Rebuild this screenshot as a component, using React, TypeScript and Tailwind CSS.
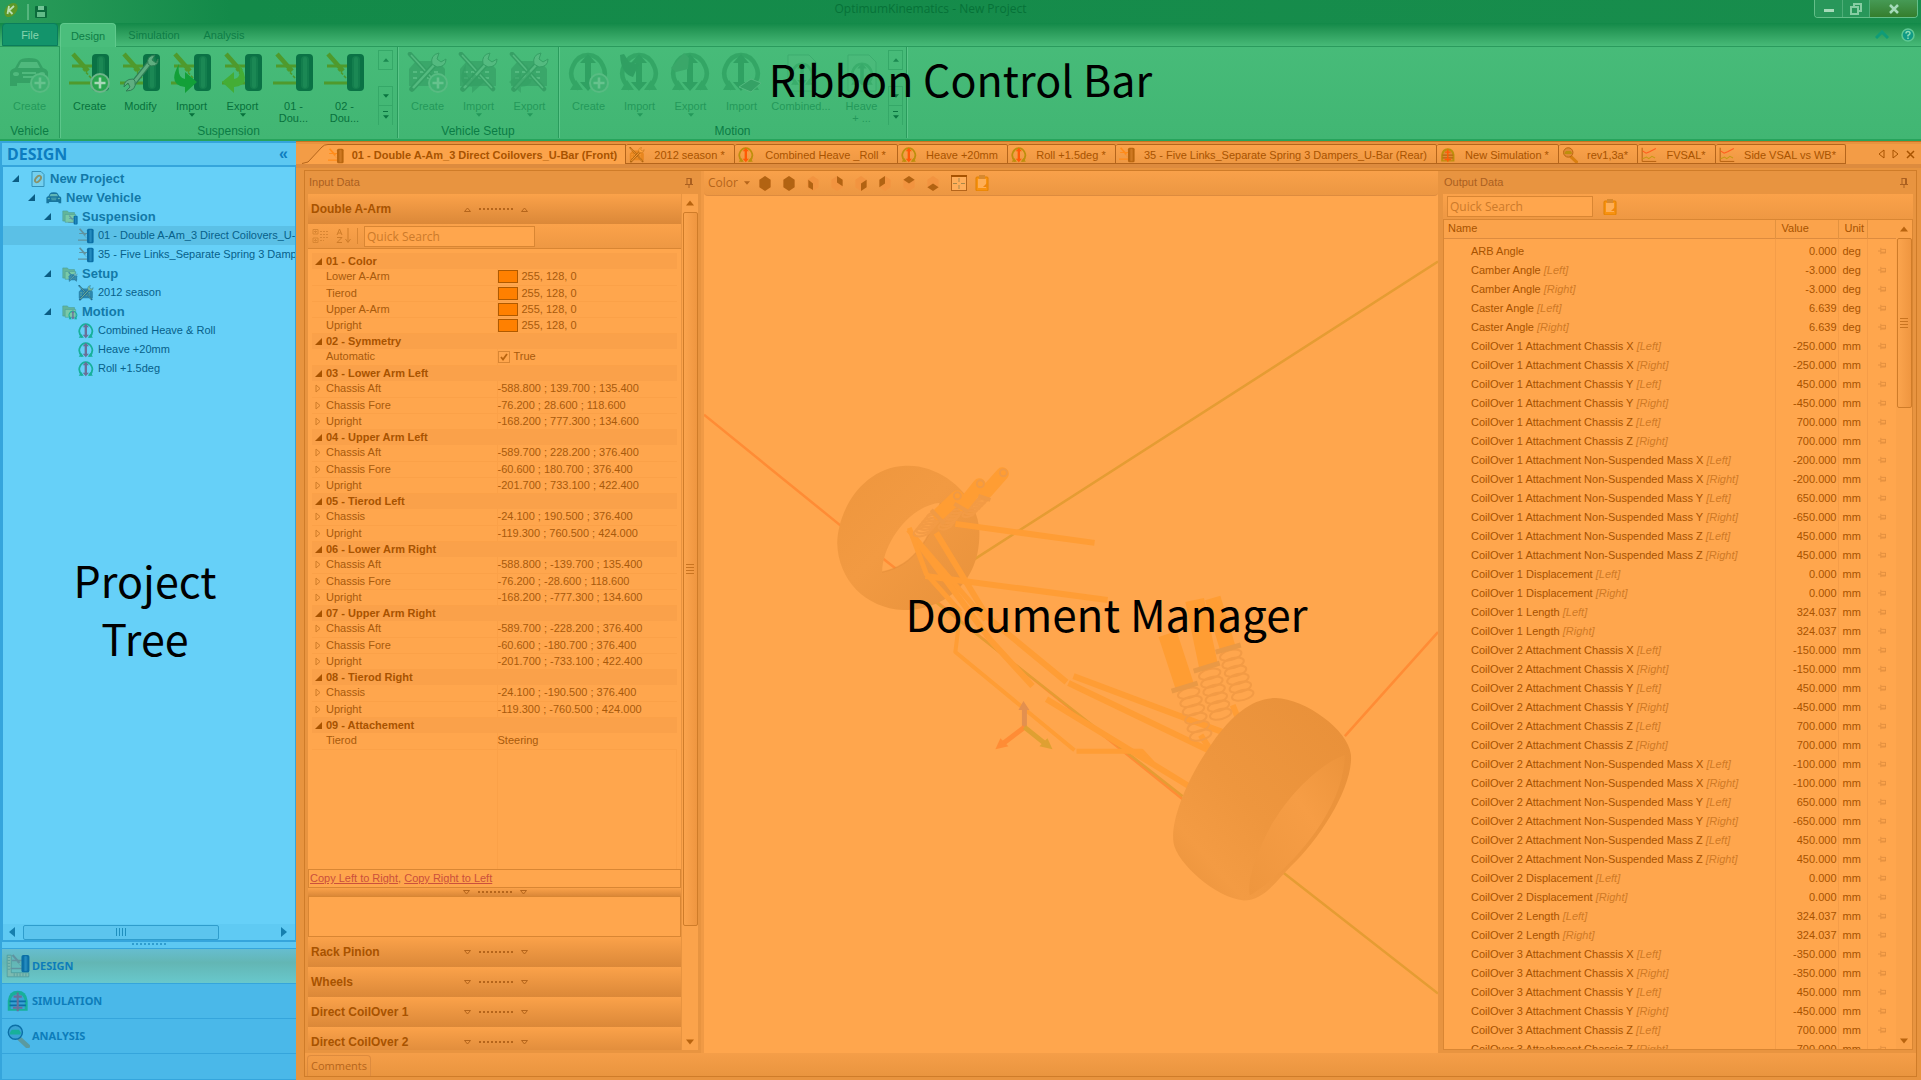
import React from "react";

/* ---------- icons ---------- */

type Tint = { arm: string; tire: string; tireLight: string; dark: string; ring: string; arrow: string };

const GREEN: Tint = { arm: "#4f9a2c", tire: "#0a7245", tireLight: "#2a9a60", dark: "#0f7b45", ring: "#2c9e5e", arrow: "#1f9453" };
const BLUE: Tint = { arm: "#5f93a0", tire: "#0b6fa6", tireLight: "#3aa3d4", dark: "#0b5d84", ring: "#17b09a", arrow: "#6a6f98" };
const ORANGE: Tint = { arm: "#ff8c1a", tire: "#b9660f", tireLight: "#e08a35", dark: "#b05a00", ring: "#bd8f0c", arrow: "#ff5a05" };

function SuspensionArt({ t }: { t: Tint }) {
  return (
    <g>
      <path d="M4 2 L19 19" stroke={t.arm} strokeWidth="4.5" />
      <path d="M3 14 L24 14 M0 31 L24 31" stroke={t.arm} strokeWidth="3" />
      <path d="M14 17 L23 27" stroke={t.arm} strokeWidth="1.6" strokeDasharray="3 1.5" />
      <rect x="23" y="2" width="17" height="37" rx="4" fill={t.tire} />
      <rect x="28" y="4" width="8" height="33" rx="4" fill={t.tireLight} opacity=".3" />
      <rect x="30" y="5" width="4" height="31" rx="2" fill={t.tireLight} opacity=".35" />
    </g>
  );
}

function MotionArt({ t, arrow = t.arrow }: { t: Tint; arrow?: string }) {
  return (
    <g fill="none">
      <path d="M11 37 C2 28 2 20 5 14 C9 5 15 3 20 3 C25 3 31 5 35 14 C38 20 38 28 29 37" stroke={t.ring} strokeWidth="4.5" />
      <path d="M2 38 L8 28 L15 38 Z M38 38 L32 28 L25 38 Z" fill={t.ring} />
      <path d="M20 9 V32" stroke={arrow} strokeWidth="6" />
      <path d="M20 2 L28 11 H12 Z M20 39 L12 30 H28 Z" fill={arrow} />
    </g>
  );
}

function CarArt({ c, l }: { c: string; l: string }) {
  return (
    <g>
      <path d="M1 20 Q2 17 6 16 L10 9 Q12 6 20 6 Q28 6 30 9 L34 16 Q38 17 39 20 V34 H32 V31 H8 V34 H1 Z" fill={c} />
      <path d="M9 16 L12 10 H28 L31 16 Z" fill={l} />
      <path d="M13 21 H27 M14 25 H26" stroke={l} strokeWidth="2" />
      <ellipse cx="7" cy="22" rx="3" ry="2" fill={l} />
      <ellipse cx="33" cy="22" rx="3" ry="2" fill={l} />
    </g>
  );
}

function SetupArt({ c, l, k }: { c: string; l: string; k: string }) {
  return (
    <g>
      <path d="M2 17 L9 9 H31 L38 17 V34 H2 Z" fill={c} />
      <path d="M6 20 H34 M6 26 H34" stroke={l} strokeWidth="2" strokeDasharray="4 3" />
      <path d="M3 2 L35 37" stroke={k} strokeWidth="4.5" strokeLinecap="round" />
      <path d="M4 3 L34 36" stroke={l} strokeWidth="1.6" />
      <path d="M5 37 L29 11" stroke={k} strokeWidth="5.5" strokeLinecap="round" />
      <path d="M6 36 L29 11" stroke={l} strokeWidth="2.4" />
      <path d="M25 12 Q23 3 32 1 L30 7 L34 10 L39 7 Q39 15 30 15 Z" fill={l} stroke={k} />
    </g>
  );
}

function Plus({ bright }: { bright?: boolean }) {
  return (
    <g>
      <circle cx="31" cy="31" r="9" fill={bright ? "#2aa64f" : "#3fae70"} stroke={bright ? "#6fb58b" : "#61bd88"} strokeWidth="2" />
      <path d="M31 25.5 V36.5 M25.5 31 H36.5" stroke={bright ? "#a9d8b8" : "#74c797"} strokeWidth="2.6" />
    </g>
  );
}

function Wrench() {
  return (
    <g>
      <path d="M12 33 L31 9" stroke="#2f7f55" strokeWidth="5.5" />
      <path d="M12 33 L31 9" stroke="#5fae80" strokeWidth="3" />
      <path d="M28 12 Q26 4 35 3 L32 8 L36 11 L38 7 Q39 14 31 14 Z M15 29 Q17 39 6 39 L10 35 L8 31 L4 35 Q4 27 13 27 Z" fill="#5fae80" stroke="#2f7f55" />
    </g>
  );
}

const ImportArrow = ({ c = "#12a038" }: { c?: string }) => (
  <path d="M8 12 Q-4 33 14 35 V41 L26 30 L14 20 V27 Q6 26 8 12 Z" fill={c} />
);
const ExportArrow = ({ c = "#44ad35" }: { c?: string }) => (
  <path d="M17 12 Q31 33 12 35 V41 L0 30 L12 20 V27 Q20 26 17 12 Z" fill={c} />
);

function Pic({ className, children }: { className: string; children: React.ReactNode }) {
  return (
    <svg viewBox="0 0 41 41" className={className} aria-hidden="true">
      {children}
    </svg>
  );
}

const Search = ({ t, handle }: { t: Tint; handle: string }) => (
  <g>
    <path d="M23 25 L37 38" stroke={handle} strokeWidth="8" strokeLinecap="round" />
    <circle cx="16" cy="14" r="12" fill={t.tireLight} stroke={t.tire} strokeWidth="2.5" />
    <path d="M7 14 L10 10 H22 L25 14 V18 H7 Z" fill={t.ring} />
  </g>
);

const Chart = () => (
  <g fill="none">
    <path d="M3 2 V37 H39" stroke="#b5620f" strokeWidth="2.5" />
    <path d="M4 10 L13 16 L22 12 L38 4" stroke="#ff5c1c" strokeWidth="2.6" />
    <path d="M4 30 L14 26 L20 30 L28 24 L36 28" stroke="#c79a14" strokeWidth="2.6" />
  </g>
);

const Simulation = ({ t }: { t: Tint }) => (
  <g>
    <path d="M3 37 V20 Q5 3 20 3 Q35 3 37 20 V37 Z" fill={t.ring} />
    <path d="M8 34 V20 Q10 9 20 9 Q30 9 32 20 V34 Z" fill={t.tireLight} />
    <path d="M6 21 H34 M6 28 H34" stroke={t.tire} strokeWidth="3" />
    <path d="M20 6 V38 M13 13 H27 M12 32 H28" stroke={t.arrow} strokeWidth="3.5" />
  </g>
);

const Folder = ({ children }: { children: React.ReactNode }) => (
  <svg viewBox="0 0 41 41" className="size-4 shrink-0" aria-hidden="true">
    <path d="M2 5 H14 L17 9 H32 V31 H2 Z" fill="#62b59b" stroke="#4b9f98" strokeWidth="1.5" />
    <path d="M8 14 H35 V34 H8 Z" fill="#79c9a8" stroke="#4b9f98" strokeWidth="1.5" />
    <g transform="translate(16 16) scale(.6)">{children}</g>
  </svg>
);

const PushPin = ({ className }: { className: string }) => (
  <svg viewBox="0 0 10 10" className={className} fill="none" stroke="currentColor" aria-hidden="true">
    <path d="M2.5 .5 H7.5 M3 .5 V6 M6.5 .5 V6 M7.5 .5 V6 M1 6.5 H9 M5 6.5 V10" />
  </svg>
);

const Clipboard = () => (
  <svg viewBox="0 0 14 16" className="h-4 w-[14px]" aria-hidden="true">
    <rect x="1" y="2" width="12" height="14" rx="1" fill="#f9920f" stroke="#e08000" />
    <rect x="3" y="4" width="8" height="9" fill="#ffae55" />
    <rect x="4" y="0" width="6" height="4" fill="#d8892f" />
    <path d="M8 12 H12 V8" fill="#f0860c" />
  </svg>
);

function Triangle({ dir, className }: { dir: "up" | "down" | "left" | "right"; className: string }) {
  const d = { up: "M0 8 L5 2 L10 8 Z", down: "M0 2 L5 8 L10 2 Z", left: "M8 0 L2 5 L8 10 Z", right: "M2 0 L8 5 L2 10 Z" }[dir];
  return (
    <svg viewBox="0 0 10 10" className={className} aria-hidden="true">
      <path d={d} fill="currentColor" />
    </svg>
  );
}

function Dots({ className }: { className: string }) {
  return (
    <span className="flex gap-[2px]" aria-hidden="true">
      {Array.from({ length: 9 }, (_, i) => (
        <span key={i} className={"size-[2px] " + className} />
      ))}
    </span>
  );
}

/* ---------- ribbon ---------- */

const dimSetup = <SetupArt c="#369f65" l="#5bbb84" k="#2f955d" />;
const dimMotion = <MotionArt t={GREEN} arrow="#27975a" />;

type Tool = { label: string; second?: string; menu?: boolean; dim?: boolean; width: string; art: React.ReactNode };

const W = "w-[51px]";
const suspensionTools: Tool[] = [
  { label: "Create", width: W, art: <><SuspensionArt t={GREEN} /><Plus bright /></> },
  { label: "Modify", width: W, art: <><SuspensionArt t={GREEN} /><Wrench /></> },
  { label: "Import", menu: true, width: W, art: <><SuspensionArt t={GREEN} /><ImportArrow /></> },
  { label: "Export", menu: true, width: W, art: <><SuspensionArt t={GREEN} /><ExportArrow /></> },
  { label: "01 -", second: "Dou...", width: W, art: <SuspensionArt t={GREEN} /> },
  { label: "02 -", second: "Dou...", width: W, art: <SuspensionArt t={GREEN} /> },
];
const setupTools: Tool[] = [
  { label: "Create", dim: true, width: W, art: <>{dimSetup}<Plus /></> },
  { label: "Import", dim: true, menu: true, width: W, art: <>{dimSetup}<g opacity=".6"><ImportArrow c="#2b935a" /></g></> },
  { label: "Export", dim: true, menu: true, width: W, art: <>{dimSetup}<g opacity=".6"><ExportArrow c="#2f985e" /></g></> },
];
const pageArt = (
  <g opacity=".6">
    <path d="M7 3 H28 L35 10 V39 H7 Z" fill="#52bd80" stroke="#319d62" />
    <g transform="translate(9 10) scale(.6)">{dimMotion}</g>
  </g>
);
const motionTools: Tool[] = [
  { label: "Create", dim: true, width: W, art: <>{dimMotion}<Plus /></> },
  { label: "Import", dim: true, menu: true, width: W, art: <>{dimMotion}<path d="M1 3 Q2 22 14 25 L20 12 L10 10 L5 2 Z" fill="#27955a" /></> },
  { label: "Export", dim: true, menu: true, width: W, art: <>{dimMotion}<path d="M1 16 L14 1 L19 6 L18 17 L6 20 Z" fill="#359f64" /></> },
  { label: "Import", dim: true, width: W, art: <>{dimMotion}<path d="M18 35 L30 27 L40 31 L30 40 Z" fill="#2f985e" stroke="#5bbb84" /></> },
  { label: "Combined...", dim: true, width: "w-[68px]", art: pageArt },
  { label: "Heave", second: "+ ...", dim: true, width: "w-[53px]", art: pageArt },
];

function ToolButton({ tool }: { tool: Tool }) {
  return (
    <button className={"flex flex-col items-center pt-[5px] text-[11px] leading-3 " + tool.width + (tool.dim ? " text-[#24985a]" : " text-[#07713c]")}>
      <svg viewBox="0 0 41 41" className={"mb-[7px] size-[41px] " + (tool.dim ? "opacity-70" : "")} aria-hidden="true">
        {tool.art}
      </svg>
      <span>{tool.label}</span>
      {tool.second && <span>{tool.second}</span>}
      {tool.menu && <Triangle dir="down" className="size-[6px]" />}
    </button>
  );
}

function Spinner() {
  return (
    <div className="mt-[3px] flex h-[75px] w-[15px] flex-col text-[#0a7541]">
      <button aria-label="Scroll up" className="flex h-5 items-center justify-center border border-[#35a868]">
        <Triangle dir="up" className="size-[6px] opacity-70" />
      </button>
      <button aria-label="Scroll down" className="mt-4 flex h-5 items-center justify-center border border-[#35a868]">
        <Triangle dir="down" className="size-[6px]" />
      </button>
      <button aria-label="More" className="flex h-[19px] flex-col items-center justify-center border-x border-[#35a868]">
        <span className="mb-[2px] h-px w-[5px] bg-current" />
        <Triangle dir="down" className="size-[6px]" />
      </button>
    </div>
  );
}

function Group({ name, children }: { name: string; children: React.ReactNode }) {
  return (
    <section className="flex flex-col border-r border-[#2a9b5d] shadow-[1px_0_0_#5cc68a]">
      <div className="flex h-[78px]">{children}</div>
      <h2 className="text-center text-xs leading-[13px] text-[#0b7c45]">{name}</h2>
    </section>
  );
}

const overlayText = "pointer-events-none absolute inset-0 flex items-center justify-center text-center font-['Noto_Sans_CJK_SC','Noto_Sans',sans-serif] text-black";

function Ribbon() {
  return (
    <header className="relative flex h-[141px] shrink-0 flex-col border-b-2 border-[#27a35c] bg-linear-to-b from-[#4abe7c] to-[#41b673]">
      <div className="bg-linear-to-b from-[#138a49] from-50% to-[#49bc7a]">
        <div className="flex h-[23px] bg-linear-to-r from-[#2a9c5a] via-transparent via-12% to-[#2b9a5b]/20">
          <div className="flex items-center gap-2 pl-[3px]">
            <svg viewBox="0 0 16 16" className="mb-1 size-4" aria-hidden="true">
              <ellipse cx="8" cy="8" rx="8" ry="5.5" transform="rotate(-50 8 8)" fill="#5e9827" />
              <path d="M6 4 L4.500 12 M11 4 L6 8.500 L9.500 12" stroke="#b9dfb4" strokeWidth="1.800" fill="none" />
            </svg>
            <span className="h-4 w-[2px] bg-[#56b57e]" />
            <button aria-label="Save" className="ml-[-2px]">
              <svg viewBox="0 0 12 12" className="size-3" aria-hidden="true">
                <rect width="12" height="12" rx="1" fill="#0b6b3c" />
                <rect x="3" width="6" height="4" fill="#73c596" />
                <rect x="2" y="6" width="8" height="5" fill="#62bb88" />
              </svg>
            </button>
          </div>
          <h1 className="grow text-center font-['Open_Sans',sans-serif] text-xs leading-[18px] text-[#067238]">OptimumKinematics - New Project</h1>
          <div className="mr-[3px] flex h-[18px] overflow-hidden rounded-b border border-t-0 border-[#63bf89]">
            <button aria-label="Minimize" className="flex w-7 items-center justify-center border-r border-[#4eae78] bg-[#28975a]">
              <span className="mt-1 h-[3px] w-[10px] bg-[#a5dab9]" />
            </button>
            <button aria-label="Restore" className="flex w-[27px] items-center justify-center border-r border-[#4eae78] bg-[#28975a]">
              <svg viewBox="0 0 12 12" className="size-3" fill="none" stroke="#86cda2" strokeWidth="2" aria-hidden="true">
                <path d="M1 4 H8 V11 H1 Z M4 3 V1 H11 V8 H9" />
              </svg>
            </button>
            <button aria-label="Close" className="flex w-[47px] items-center justify-center bg-linear-to-b from-[#469a55] to-[#357e2c]">
              <svg viewBox="0 0 10 10" className="size-[10px]" stroke="#a5dab9" strokeWidth="2.500" aria-hidden="true">
                <path d="M1 1 L9 9 M9 1 L1 9" />
              </svg>
            </button>
          </div>
        </div>
        <nav className="flex h-6 items-stretch border-b border-[#2a9b5d] text-xs leading-6 text-[#0d7d46]">
          <button className="ml-[2px] w-14 rounded-t-sm border border-[#0b7d5c] bg-[#13946b] text-[11px] leading-[22px] text-[#86d4ae]">File</button>
          <button className="relative -mb-px ml-[2px] w-14 rounded-t-sm border border-b-0 border-[#5fc98c] bg-[#4abe7c] text-[11px] leading-[22px]">Design</button>
          <button className="w-[76px] text-[11px]">Simulation</button>
          <button className="w-16 text-[11px]">Analysis</button>
          <span className="grow" />
          <button aria-label="Collapse ribbon" className="px-2">
            <svg viewBox="0 0 14 10" className="h-[10px] w-[14px]" fill="none" stroke="#0f9c78" strokeWidth="3" aria-hidden="true">
              <path d="M1 8 L7 2 L13 8" />
            </svg>
          </button>
          <button aria-label="Help" className="mr-[6px] ml-1">
            <svg viewBox="0 0 14 14" className="size-[14px]" aria-hidden="true">
              <circle cx="7" cy="7" r="6" fill="#109a85" stroke="#5fc893" strokeWidth="1.500" />
              <path d="M5 5.500 Q5 3.500 7 3.500 Q9 3.500 9 5.300 Q9 6.500 7 7.500 V8.500 M7 9.500 V11" stroke="#8cdcb4" strokeWidth="1.500" fill="none" />
            </svg>
          </button>
        </nav>
      </div>
      <div className="flex h-[91px]">
        <Group name="Vehicle">
          <ToolButton tool={{ label: "Create", dim: true, width: "w-[59px]", art: <><CarArt c="#2f985e" l="#55b980" /><Plus /></> }} />
        </Group>
        <Group name="Suspension">
          <div className="flex pr-[8px] pl-1">
            {suspensionTools.map((t, i) => <ToolButton key={i} tool={t} />)}
          </div>
          <Spinner />
          <span className="w-1" />
        </Group>
        <Group name="Vehicle Setup">
          <div className="flex pr-[3px] pl-1">
            {setupTools.map((t, i) => <ToolButton key={i} tool={t} />)}
          </div>
        </Group>
        <Group name="Motion">
          <div className="flex pl-1">
            {motionTools.map((t, i) => <ToolButton key={i} tool={t} />)}
          </div>
          <Spinner />
          <span className="w-[3px]" />
        </Group>
      </div>
      <div className={overlayText + " pt-[18px] text-[43px] leading-none"}>Ribbon Control Bar</div>
    </header>
  );
}

/* ---------- project tree ---------- */

type Node = { level: number; label: string; art: React.ReactNode; selected?: boolean };

const suspSmall = <Pic className="size-4 shrink-0"><SuspensionArt t={BLUE} /></Pic>;
const motionSmall = <Pic className="size-4 shrink-0"><MotionArt t={BLUE} /></Pic>;

const nodes: Node[] = [
  {
    level: 0, label: "New Project", art: (
      <svg viewBox="0 0 14 16" className="mx-px h-4 w-[14px] shrink-0" fill="none" aria-hidden="true">
        <path d="M1 .5 H10 L13 3.500 V15.500 H1 Z" fill="#74d0ef" stroke="#3391b8" />
        <ellipse cx="7" cy="8" rx="3.800" ry="2.200" transform="rotate(-50 7 8)" stroke="#8a9168" strokeWidth="1.800" />
      </svg>
    ),
  },
  { level: 1, label: "New Vehicle", art: <Pic className="size-4 shrink-0"><CarArt c="#17759e" l="#5fb6b6" /></Pic> },
  { level: 2, label: "Suspension", art: <Folder><SuspensionArt t={BLUE} /></Folder> },
  { level: 3, label: "01 - Double A-Am_3 Direct Coilovers_U-Bar (Front)", art: suspSmall, selected: true },
  { level: 3, label: "35 - Five Links_Separate Spring 3 Dampers_U-Bar (Rear)", art: suspSmall },
  { level: 2, label: "Setup", art: <Folder><SetupArt c="#2b86ad" l="#8cc9c0" k="#1f6f96" /></Folder> },
  { level: 3, label: "2012 season", art: <Pic className="size-4 shrink-0"><SetupArt c="#2b86ad" l="#7db998" k="#1f6f96" /></Pic> },
  { level: 2, label: "Motion", art: <Folder><MotionArt t={BLUE} /></Folder> },
  { level: 3, label: "Combined Heave & Roll", art: motionSmall },
  { level: 3, label: "Heave +20mm", art: motionSmall },
  { level: 3, label: "Roll +1.5deg", art: motionSmall },
];

const indents = ["pl-[9px]", "pl-[25px]", "pl-[41px]", "pl-[57px]"];

const Expanded = ({ className }: { className: string }) => (
  <svg viewBox="0 0 7 7" className={"size-[7px] shrink-0 " + className} aria-hidden="true">
    <path d="M0 7 L7 0 V7 Z" fill="currentColor" />
  </svg>
);

function Sidebar() {
  const sections = [
    { name: "DESIGN", active: true, art: <><path d="M2 2 V39 H39 V32 H9 V2 Z" fill="#7cbab0" stroke="#3f8f93" /><path d="M3 6 H7 M3 11 H7 M3 16 H7 M3 21 H7 M3 26 H7 M14 33 V38 M19 33 V38 M24 33 V38 M29 33 V38 M34 33 V38" stroke="#3f8f93" /><g transform="translate(8 0) scale(.8)"><SuspensionArt t={BLUE} /></g></> },
    { name: "SIMULATION", active: false, art: <Simulation t={BLUE} /> },
    { name: "ANALYSIS", active: false, art: <Search t={BLUE} handle="#5a9aa0" /> },
  ];
  return (
    <aside className="relative flex w-[296px] shrink-0 flex-col border-t-2 border-l-2 border-[#35a5dc] bg-[#4ab8e9]">
      <div className="flex h-6 items-center justify-between border-b-2 border-[#35a5dc] bg-[#5dc8f2] pr-2 pl-[5px] text-[#0d7dc0]">
        <h2 className="font-['Noto_Sans',sans-serif] text-base leading-5 font-bold">DESIGN</h2>
        <button aria-label="Collapse panel" className="pb-px text-base leading-4 font-bold">«</button>
      </div>
      <div className="flex min-h-0 flex-1 flex-col border-x border-b-2 border-[#35a5dc] bg-[#66d0f8]">
        <ul role="tree" className="min-h-0 flex-1 overflow-hidden pt-[2px]">
          {nodes.map((n) => (
            <li
              key={n.label}
              role="treeitem"
              className={"flex h-[19px] items-center whitespace-nowrap " + indents[n.level] + (n.selected ? " bg-[#5bc0e6]" : "") + (n.level < 3 ? " text-[13px] font-bold text-[#1279a8]" : " text-[11px] text-[#07608a]")}
            >
              <Expanded className={"mr-[11px] " + (n.level < 3 ? "text-[#0b5d84]" : "invisible")} />
              {n.art}
              <span className="ml-1">{n.label}</span>
            </li>
          ))}
        </ul>
        <div className="flex h-4 items-center gap-[6px] bg-[#5fcaf3] pr-[6px] pl-1 text-[#167fae]">
          <Triangle dir="left" className="size-[10px]" />
          <div className="flex h-[15px] w-[196px] items-center justify-center gap-[2px] rounded-xs border border-[#2f9dcc] bg-[#5cc5ee]">
            {[0, 1, 2, 3].map((i) => <span key={i} className="h-2 w-px bg-[#1f8fbd]" />)}
          </div>
          <Triangle dir="right" className="ml-auto size-[10px]" />
        </div>
      </div>
      <div className="flex h-[6px] items-start justify-center bg-[#5dc8f2] pt-px"><Dots className="bg-[#2f9dcf]" /></div>
      <nav>
        {sections.map((s) => (
          <button
            key={s.name}
            className={"flex h-[35px] w-full items-center gap-[2px] border-t border-[#35a5dc] pl-1 font-['Noto_Sans',sans-serif] text-[11px] font-bold text-[#0d7dba] " + (s.active ? "bg-linear-to-b from-[#66bdd0] via-[#63b6b4] via-40% to-[#68c8cc]" : "")}
          >
            <Pic className="size-6"><>{s.art}</></Pic>
            {s.name}
          </button>
        ))}
      </nav>
      <div className="h-[27px] border-y border-[#35a5dc]" />
      <div className={overlayText + " pr-2 pb-2 text-[43px] leading-[58px]"}>Project<br />Tree</div>
    </aside>
  );
}

/* ---------- document tabs ---------- */

const motionOrange = <MotionArt t={ORANGE} />;
const docs = [
  { label: "2012 season *", width: "w-[109px]", art: <SetupArt c="#e8871f" l="#ffa23a" k="#b0650f" /> },
  { label: "Combined Heave _Roll *", width: "w-[163px]", art: motionOrange },
  { label: "Heave +20mm", width: "w-[110px]", art: motionOrange },
  { label: "Roll +1.5deg *", width: "w-[108px]", art: motionOrange },
  { label: "35 - Five Links_Separate Spring 3 Dampers_U-Bar (Rear)", width: "w-[321px]", art: <SuspensionArt t={ORANGE} /> },
  { label: "New Simulation *", width: "w-[122px]", art: <Simulation t={ORANGE} /> },
  { label: "rev1,3a*", width: "w-[79px]", art: <Search t={ORANGE} handle="#d97f10" /> },
  { label: "FVSAL*", width: "w-[78px]", art: <Chart /> },
  { label: "Side VSAL vs WB*", width: "w-[130px]", art: <Chart /> },
];

function DocumentTabs() {
  return (
    <div role="tablist" className="flex h-6 shrink-0 items-stretch border-b-4 border-[#dd8b3e] pl-[6px] text-[#a85300]">
      <svg viewBox="0 0 26 20" className="h-5 w-[26px] shrink-0" aria-hidden="true">
        <path d="M0 20 L6 18 L20 3 Q22 .5 26 .5 V20 Z" fill="#fca34a" />
        <path d="M0 19.500 L6 18 L20 3 Q22 .5 26 .5" fill="none" stroke="#b5651b" />
      </svg>
      <button role="tab" aria-selected="true" className="flex w-[298px] items-center border-t border-r border-[#b5651b] bg-[#fca34a] pt-[2px] text-[11px] font-bold whitespace-nowrap">
        <Pic className="size-4 shrink-0"><SuspensionArt t={ORANGE} /></Pic>
        <span className="grow">01 - Double A-Am_3 Direct Coilovers_U-Bar (Front)</span>
      </button>
      {docs.map((d) => (
        <button
          key={d.label}
          role="tab"
          aria-selected="false"
          className={"flex shrink-0 items-center rounded-t-xs border-t border-r border-b border-[#b5651b] bg-linear-to-b from-[#fba24a] to-[#ee9843] pt-[2px] pl-[3px] text-[11px] whitespace-nowrap " + d.width}
        >
          <Pic className="size-4 shrink-0"><>{d.art}</></Pic>
          <span className="grow">{d.label}</span>
        </button>
      ))}
      <div className="ml-auto flex items-center gap-[7px] pr-[6px]">
        <button aria-label="Previous tab">
          <svg viewBox="0 0 7 10" className="h-[10px] w-[7px]" fill="none" stroke="currentColor" aria-hidden="true"><path d="M6 1 L1 5 L6 9 Z" /></svg>
        </button>
        <button aria-label="Next tab">
          <svg viewBox="0 0 7 10" className="h-[10px] w-[7px]" fill="none" stroke="currentColor" aria-hidden="true"><path d="M1 1 L6 5 L1 9 Z" /></svg>
        </button>
        <button aria-label="Close tab">
          <svg viewBox="0 0 9 9" className="size-[9px]" stroke="currentColor" strokeWidth="1.500" aria-hidden="true"><path d="M1 1 L8 8 M8 1 L1 8" /></svg>
        </button>
      </div>
    </div>
  );
}

/* ---------- input data ---------- */

type Prop = { name: string; value: string; kind?: "color" | "check" | "text" };
const p = (name: string, value: string, kind?: Prop["kind"]): Prop => ({ name, value, kind });

const groups: { title: string; props: Prop[] }[] = [
  { title: "01 - Color", props: ["Lower A-Arm", "Tierod", "Upper A-Arm", "Upright"].map((n) => p(n, "255, 128, 0", "color")) },
  { title: "02 - Symmetry", props: [p("Automatic", "True", "check")] },
  { title: "03 - Lower Arm Left", props: [p("Chassis Aft", "-588.800 ; 139.700 ; 135.400"), p("Chassis Fore", "-76.200 ; 28.600 ; 118.600"), p("Upright", "-168.200 ; 777.300 ; 134.600")] },
  { title: "04 - Upper Arm Left", props: [p("Chassis Aft", "-589.700 ; 228.200 ; 376.400"), p("Chassis Fore", "-60.600 ; 180.700 ; 376.400"), p("Upright", "-201.700 ; 733.100 ; 422.400")] },
  { title: "05 - Tierod Left", props: [p("Chassis", "-24.100 ; 190.500 ; 376.400"), p("Upright", "-119.300 ; 760.500 ; 424.000")] },
  { title: "06 - Lower Arm Right", props: [p("Chassis Aft", "-588.800 ; -139.700 ; 135.400"), p("Chassis Fore", "-76.200 ; -28.600 ; 118.600"), p("Upright", "-168.200 ; -777.300 ; 134.600")] },
  { title: "07 - Upper Arm Right", props: [p("Chassis Aft", "-589.700 ; -228.200 ; 376.400"), p("Chassis Fore", "-60.600 ; -180.700 ; 376.400"), p("Upright", "-201.700 ; -733.100 ; 422.400")] },
  { title: "08 - Tierod Right", props: [p("Chassis", "-24.100 ; -190.500 ; 376.400"), p("Upright", "-119.300 ; -760.500 ; 424.000")] },
  { title: "09 - Attachement", props: [p("Tierod", "Steering", "text")] },
];

const Hollow = ({ up }: { up?: boolean }) => (
  <svg viewBox="0 0 7 5" className="h-[5px] w-[7px]" fill="none" stroke="currentColor" aria-hidden="true">
    <path d={up ? "M.5 4.500 H6.500 L3.500 1 Z" : "M.5 .5 H6.500 L3.500 4 Z"} />
  </svg>
);

function Grip({ up }: { up?: boolean }) {
  return (
    <span className="flex items-center justify-center gap-2 text-[#b5651b]">
      <Hollow up={up} />
      <Dots className="bg-[#b5651b]" />
      <Hollow up={up} />
    </span>
  );
}

function SectionBar({ title, open }: { title: string; open?: boolean }) {
  return (
    <button className="grid h-[30px] w-full shrink-0 grid-cols-[1fr_auto_1fr] items-center bg-linear-to-b from-[#fba24a] to-[#db8838] pl-[3px] text-left">
      <span className="text-xs font-bold text-[#a85300]">{title}</span>
      <Grip up={open} />
      <span />
    </button>
  );
}

function VScroll({ className, thumb }: { className: string; thumb: string }) {
  return (
    <div className={"flex w-4 shrink-0 flex-col items-center bg-[#fba34b] text-[#b9640f] " + className}>
      <Triangle dir="up" className="my-[5px] size-2 shrink-0" />
      <div className={"flex w-[15px] flex-col items-center justify-center gap-[2px] rounded-xs border border-[#cf7c29] bg-linear-to-r from-[#fba44d] to-[#ef9640] " + thumb}>
        {[0, 1, 2, 3].map((i) => <span key={i} className="h-px w-2 bg-[#c97420]" />)}
      </div>
      <Triangle dir="down" className="mt-auto mb-1 size-2 shrink-0" />
    </div>
  );
}

function PanelTitle({ children }: { children: React.ReactNode }) {
  return (
    <div className="flex h-[23px] shrink-0 items-center justify-between px-px pr-1 text-[11px] text-[#ab6020]">
      <h2>{children}</h2>
      <button aria-label="Pin panel"><PushPin className="size-[10px]" /></button>
    </div>
  );
}

const searchBox = "rounded-none border border-[#d98633] bg-[#ffa64d] px-[2px] font-['Open_Sans',sans-serif] text-xs text-[#c06c1c] outline-none placeholder:text-[#cc7a2a]";

function InputPanel() {
  return (
    <section className="flex w-[396px] shrink-0 flex-col bg-[#e89440] px-[3px] pb-[3px]">
      <PanelTitle>Input Data</PanelTitle>
      <div className="flex min-h-0 flex-1">
        <div className="flex min-w-0 flex-1 flex-col overflow-hidden bg-[#ffa64d]">
          <SectionBar title="Double A-Arm" open />
          <div className="flex h-[25px] shrink-0 items-center border-b border-[#d98633] bg-linear-to-b from-[#fba24a] to-[#ee9843] pl-1">
            <button aria-label="Categorized">
              <svg viewBox="0 0 17 16" className="h-4 w-[17px]" fill="none" stroke="#d98633" aria-hidden="true">
                <path d="M1 1.500 H6 V6 H1 Z M1 10 H6 V14.500 H1 Z M3.500 2.500 V5 M2 3.500 H5 M3.500 11 V13.500 M2 12.500 H5" />
                <path d="M8 3.500 H16 M8 6.500 H16 M8 9.500 H16 M8 12.500 H12" strokeDasharray="2 1" />
              </svg>
            </button>
            <button aria-label="Sort alphabetically" className="ml-[7px] flex items-center gap-[3px] text-[#cf7c29]">
              <svg viewBox="0 0 15 16" className="h-4 w-[15px]" fill="none" stroke="currentColor" aria-hidden="true">
                <path d="M1 7 L3.500 1 L6 7 M2 5 H5 M1 9.500 H6 L1 14.500 H6" />
                <path d="M12 0 V14 M9.500 11 L12 14.500 L14.500 11" />
              </svg>
            </button>
            <span className="mx-[6px] h-4 w-px bg-[#d98633]" />
            <input aria-label="Search properties" placeholder="Quick Search" className={"h-[21px] w-[171px] " + searchBox} />
          </div>
          <div className="flex min-h-0 flex-1 flex-col overflow-hidden px-1 pt-1">
            <table className="w-full table-fixed border-collapse text-[11px] leading-[15px] text-[#a85a0c]">
              <colgroup><col className="w-[185px]" /><col /></colgroup>
              {groups.map((g) => (
                <tbody key={g.title}>
                  <tr className="h-4 bg-[#faa14a]">
                    <th colSpan={2} scope="rowgroup" className="p-0 pl-[3px] text-left font-bold text-[#a85300]">
                      <span className="flex items-center gap-1"><Expanded className="" />{g.title}</span>
                    </th>
                  </tr>
                  {g.props.map((r) => (
                    <tr key={r.name} className="h-4 border-b border-[#fba148]">
                      <th scope="row" className="p-0 pl-[3px] text-left font-normal">
                        <span className="flex items-center gap-[5px]">
                          <svg viewBox="0 0 6 9" className={"h-[9px] w-[6px] " + (r.kind ? "invisible" : "")} fill="none" stroke="#cf7c29" aria-hidden="true"><path d="M1 1 L5 4.500 L1 8 Z" /></svg>
                          {r.name}
                        </span>
                      </th>
                      <td className="border-l border-[#fba148] p-0">
                        {r.kind === "color" && (
                          <span className="flex items-center gap-1"><span className="h-[13px] w-5 border border-[#b05a00] bg-[#ff8000]" />{r.value}</span>
                        )}
                        {r.kind === "check" && (
                          <label className="flex items-center gap-1">
                            <span className="relative grid size-3 place-items-center border border-[#d98633]">
                              <input type="checkbox" defaultChecked className="absolute inset-0 appearance-none" />
                              <svg viewBox="0 0 8 8" className="pointer-events-none size-2" fill="none" stroke="#b9640f" strokeWidth="1.800" aria-hidden="true"><path d="M1 4 L3 6.500 L7 1" /></svg>
                            </span>
                            {r.value}
                          </label>
                        )}
                        {(!r.kind || r.kind === "text") && r.value}
                      </td>
                    </tr>
                  ))}
                </tbody>
              ))}
            </table>
            <div className="ml-[185px] min-h-0 flex-1 border-x border-[#fba148]" />
          </div>
          <div className="h-[19px] shrink-0 border border-[#d98633] px-px text-[11px] leading-[17px] text-[#c05a28]">
            <a href="#left-to-right" className="text-[#cb503c] underline">Copy Left to Right</a>, <a href="#right-to-left" className="text-[#cb503c] underline">Copy Right to Left</a>
          </div>
          <div className="flex h-2 shrink-0 items-center justify-center bg-linear-to-b from-[#fba24a] to-[#db8838]"><Grip /></div>
          <div className="h-[41px] shrink-0 border border-[#d98633]" />
          <SectionBar title="Rack Pinion" />
          <SectionBar title="Wheels" />
          <SectionBar title="Direct CoilOver 1" />
          <div className="h-[23px] shrink-0 overflow-hidden"><SectionBar title="Direct CoilOver 2" /></div>
        </div>
        <VScroll className="ml-px" thumb="h-[714px]" />
      </div>
    </section>
  );
}

/* ---------- 3D view ---------- */

const cubes = [
  "M0 4 L6 0 L12 4 V12 L6 16 L0 12 Z",
  "M0 4 L6 0 L12 4 V12 L6 16 L0 12 Z",
  "M1 4 L6 8 V15 L1 12 Z",
  "M6 0 L12 4 V11 L6 7 Z",
  "M6 8 L12 4 V12 L6 16 Z",
  "M0 4 L6 0 V8 L0 12 Z",
  "M0 4 L6 0 L12 4 L6 8 Z",
  "M0 12 L6 8 L12 12 L6 16 Z",
];

function Spring({ x1, y1, x2, y2, r }: { x1: number; y1: number; x2: number; y2: number; r: number }) {
  const n = 6;
  return (
    <g fill="none" stroke="#f39b45" strokeWidth="2">
      {Array.from({ length: n }, (_, i) => {
        const f = i / (n - 1);
        return <ellipse key={i} cx={x1 + (x2 - x1) * f} cy={y1 + (y2 - y1) * f} rx={r} ry={r * 0.45} transform={`rotate(-15 ${x1 + (x2 - x1) * f} ${y1 + (y2 - y1) * f})`} />;
      })}
    </g>
  );
}

function Scene() {
  return (
    <svg viewBox="704 196 733 857" preserveAspectRatio="xMidYMid slice" className="block min-h-0 w-full flex-1" aria-label="Suspension model">
      <defs>
        <linearGradient id="tireA" x1="0" y1="0" x2="1" y2="1">
          <stop offset="0" stopColor="#ee963d" /><stop offset=".45" stopColor="#f29a42" /><stop offset="1" stopColor="#e8923b" />
        </linearGradient>
        <linearGradient id="tireB" x1="1" y1="0" x2="0" y2="1">
          <stop offset="0" stopColor="#e89039" /><stop offset=".55" stopColor="#ee963e" /><stop offset=".8" stopColor="#f39b43" /><stop offset="1" stopColor="#e9923b" />
        </linearGradient>
        <linearGradient id="rimB" x1="0" y1="1" x2="1" y2="0">
          <stop offset="0" stopColor="#ee963e" /><stop offset=".6" stopColor="#f69d45" /><stop offset="1" stopColor="#ec943c" />
        </linearGradient>
      </defs>
      <path d="M704 415 L842 527 M882 558 L896 569 M932 598 L1182 799 M1344 736 L1437 632" stroke="#ff8c35" strokeWidth="2.5" />
      <path d="M1437 262 L970 562 M934 601 L1182 796 M1282 872 L1437 993" stroke="#e59c33" strokeWidth="2.5" />

      <path fillRule="evenodd" fill="url(#tireA)" d="M837 543 C838 510 862 468 905 466 C940 464 978 495 979 532 C980 590 935 611 903 610 C865 608 838 580 837 543 Z M882 572 C882 545 908 506 940 503 C932 535 915 566 882 572 Z" />
      <path d="M882 572 C915 566 932 535 940 503" fill="none" stroke="#e18c38" strokeWidth="1.500" opacity=".5" />

      <g stroke="#ff9d35" strokeWidth="6" fill="none" strokeLinejoin="round">
        <path d="M955 524 L1094 543 M925 576 L1107 600" />
        <path d="M936 533 L987 617 L1066 682" />
        <path d="M912 535 L990 640 L1032 686" />
        <path d="M909 528 L926 574 L960 612" strokeWidth="5" />
        <path d="M908 530 L975 608 L985 620" strokeWidth="5" />
        <path d="M960 612 L955 652 L1074 750" strokeWidth="4" />
        <path d="M1076 751 L1141 751 L1152 763" strokeWidth="5" />
        <path d="M1073 676 L1222 732" />
        <path d="M1068 683 L1212 752 M1046 699 L1190 787" />
        <path d="M1200 735 L1210 750 M1232 705 L1240 725" />
      </g>

      <Spring x1={922} y1={532} x2={935} y2={516} r={9} />
      <Spring x1={945} y1={526} x2={957} y2={510} r={7} />
      <Spring x1={968} y1={514} x2={982} y2={500} r={6} />
      <g stroke="#ff9d33" strokeWidth="13" strokeLinecap="round">
        <path d="M939 514 L957 497 M963 505 L979 485 M986 492 L1002 474" />
      </g>
      <g stroke="#f09a45" strokeWidth="4" fill="none">
        <path d="M931 510 L944 524 M954 504 L968 512 M978 496 L990 500" />
        <circle cx="957" cy="496" r="3.500" strokeWidth="2" />
        <circle cx="980" cy="484" r="3.500" strokeWidth="2" />
        <circle cx="1003" cy="473" r="3.500" strokeWidth="2" />
      </g>

      <Spring x1={1188} y1={693} x2={1200} y2={735} r={11} />
      <Spring x1={1209} y1={674} x2={1220} y2={714} r={11} />
      <Spring x1={1230} y1={655} x2={1242} y2={695} r={11} />
      <g stroke="#ff9d33" strokeWidth="19">
        <path d="M1167 634 L1184 686 M1194 600 L1208 667" />
        <path d="M1212 598 L1227 648" strokeWidth="16" />
      </g>
      <g stroke="#ea9945" strokeWidth="5">
        <path d="M1171 691 L1197 683 M1193 671 L1219 663 M1215 652 L1240 645" />
      </g>

      <path fill="url(#tireB)" d="M1275 698 C1305 699 1347 730 1350 754 C1353 785 1320 838 1290 866 C1273 884 1262 900 1243 900 C1215 898 1176 862 1173 843 C1169 820 1188 775 1212 742 C1232 714 1252 698 1275 698 Z" />
      <path fill="url(#rimB)" d="M1344 755 C1320 762 1280 800 1262 842 C1250 868 1247 885 1249 895 C1275 880 1342 820 1344 755 Z" />

      <path d="M1024 727 V706" stroke="#e3904f" strokeWidth="5" />
      <path d="M1023 701 L1029 710 H1018 Z" fill="#e3904f" />
      <path d="M1024 727 L1003 743" stroke="#ff8c35" strokeWidth="5" />
      <path d="M995 749 L1000 738 L1008 746 Z" fill="#ff8c35" />
      <path d="M1024 727 L1044 743" stroke="#dfa032" strokeWidth="5" />
      <path d="M1052 749 L1039 746 L1047 738 Z" fill="#dfa032" />
    </svg>
  );
}

function Viewport() {
  return (
    <section className="ml-[3px] flex min-w-0 flex-1 flex-col bg-[#ffa64d]">
      <div className="flex h-[25px] shrink-0 items-center gap-3 rounded-b border-b border-[#dd8b3e] bg-linear-to-b from-[#f9a14a] to-[#ec9742] pl-1">
        <button className="-mr-[3px] flex items-center gap-[6px] font-['Open_Sans',sans-serif] text-xs text-[#b5651b]">
          Color <Triangle dir="down" className="size-[6px]" />
        </button>
        {cubes.map((d, i) => (
          <button key={i} aria-label={"View " + (i + 1)}>
            <svg viewBox="0 0 12 16" className="h-[15px] w-3 shrink-0" aria-hidden="true">
              <path d={cubes[0]} fill="#f29440" />
              <path d={d} fill="#b26312" />
            </svg>
          </button>
        ))}
        <button aria-label="Fit view">
          <svg viewBox="0 0 16 16" className="size-4" fill="none" aria-hidden="true">
            <rect x=".5" y=".5" width="15" height="15" fill="#ffae5a" stroke="#b5651b" />
            <path d="M0 1 H16" stroke="#a85300" strokeWidth="2" />
            <path d="M8 3 V7 M8 10 V14 M2 8.500 H6 M10 8.500 H14" stroke="#a8894a" />
          </svg>
        </button>
        <button aria-label="Copy view" className="-ml-1"><Clipboard /></button>
      </div>
      <Scene />
    </section>
  );
}

/* ---------- output data ---------- */

type Out = { name: string; side?: "Left" | "Right"; value: string; unit: string };
const pair = (name: string, left: string, right = left, unit = "mm"): Out[] => [
  { name, side: "Left", value: left, unit },
  { name, side: "Right", value: right, unit },
];
const coil = (n: number, chassisX: string, massX: string): Out[] => [
  ...pair(`CoilOver ${n} Attachment Chassis X`, chassisX),
  ...pair(`CoilOver ${n} Attachment Chassis Y`, "450.000", "-450.000"),
  ...pair(`CoilOver ${n} Attachment Chassis Z`, "700.000"),
  ...pair(`CoilOver ${n} Attachment Non-Suspended Mass X`, massX),
  ...pair(`CoilOver ${n} Attachment Non-Suspended Mass Y`, "650.000", "-650.000"),
  ...pair(`CoilOver ${n} Attachment Non-Suspended Mass Z`, "450.000"),
  ...pair(`CoilOver ${n} Displacement`, "0.000"),
  ...pair(`CoilOver ${n} Length`, "324.037"),
];
const outputs: Out[] = [
  { name: "ARB Angle", value: "0.000", unit: "deg" },
  ...pair("Camber Angle", "-3.000", "-3.000", "deg"),
  ...pair("Caster Angle", "6.639", "6.639", "deg"),
  ...coil(1, "-250.000", "-200.000"),
  ...coil(2, "-150.000", "-100.000"),
  ...coil(3, "-350.000", "-300.000").slice(0, 6),
];

function OutputPanel() {
  return (
    <section className="flex w-[478px] shrink-0 flex-col bg-[#e89440] pr-[3px] pb-[3px] pl-[5px]">
      <PanelTitle>Output Data</PanelTitle>
      <div className="flex h-[25px] shrink-0 items-center gap-[10px] bg-linear-to-b from-[#fba24a] to-[#ee9843] pl-1">
        <input aria-label="Search outputs" placeholder="Quick Search" className={"h-[21px] w-[146px] " + searchBox} />
        <button aria-label="Copy outputs"><Clipboard /></button>
      </div>
      <div className="flex min-h-0 flex-1 border border-[#d98633] bg-[#ffa64d]">
        <div className="min-w-0 flex-1 overflow-hidden">
          <table className="w-full table-fixed border-collapse text-[11px] text-[#a85300]">
            <colgroup><col /><col className="w-[63px]" /><col className="w-[29px]" /><col className="w-[29px]" /></colgroup>
            <thead>
              <tr className="h-[18px] border-b border-[#dd8b3e] bg-[#fba34b] leading-[17px]">
                <th scope="col" className="border-r border-[#e3923f] p-0 pl-1 text-left font-normal">Name</th>
                <th scope="col" className="border-r border-[#e3923f] p-0 pl-[6px] text-left font-normal">Value</th>
                <th scope="col" className="border-r border-[#e3923f] p-0 pl-[6px] text-left font-normal">Unit</th>
                <th scope="col" aria-label="Pinned" className="p-0" />
              </tr>
            </thead>
            <tbody>
              <tr aria-hidden="true" className="h-[3px]">
                <td className="border-r border-[#f59d48] p-0" /><td className="border-r border-[#f59d48] p-0" /><td className="border-r border-[#f59d48] p-0" /><td className="p-0" />
              </tr>
              {outputs.map((o, i) => (
                <tr key={i} className="h-[19px] leading-[18px] whitespace-nowrap">
                  <td className="border-r border-[#f59d48] p-0 pl-[27px]">
                    {o.name}{o.side && <i className="text-[#cf7a26]"> [{o.side}]</i>}
                  </td>
                  <td className="border-r border-[#f59d48] p-0 pr-px text-right">{o.value}</td>
                  <td className="border-r border-[#f59d48] p-0 pl-1">{o.unit}</td>
                  <td className="p-0">
                    <PushPin className="mx-auto size-2 rotate-90 text-[#dd8b3e]" />
                  </td>
                </tr>
              ))}
            </tbody>
          </table>
        </div>
        <VScroll className="" thumb="h-[170px]" />
      </div>
    </section>
  );
}

/* ---------- page ---------- */

export default function App() {
  return (
    <div className="flex h-screen flex-col overflow-hidden bg-[#15894a] font-['Liberation_Sans',Arial,sans-serif]">
      <Ribbon />
      <div className="flex min-h-0 flex-1">
        <Sidebar />
        <main className="relative flex min-w-0 flex-1 flex-col border-t border-[#c97420] bg-[#e8943f] pt-[2px]">
          <div className="bg-[#f39c46]"><DocumentTabs /></div>
          <div className="mt-[2px] mr-1 mb-[3px] ml-2 flex min-h-0 flex-1 flex-col border border-[#cf7c29] bg-[#f09a45]">
            <div className="flex min-h-0 flex-1">
              <InputPanel />
              <Viewport />
              <OutputPanel />
            </div>
            <div className="flex h-[23px] shrink-0 items-end bg-linear-to-b from-[#f59e48] to-[#ea953f] pl-[2px]">
              <button className="h-[21px] rounded-t border border-b-0 border-[#dd8b3e] px-[3px] font-['Open_Sans',sans-serif] text-[11px] text-[#b5651b]">Comments</button>
            </div>
          </div>
          <div className={overlayText + " pt-1 pr-1 text-[44px] leading-none"}>Document Manager</div>
        </main>
      </div>
    </div>
  );
}
